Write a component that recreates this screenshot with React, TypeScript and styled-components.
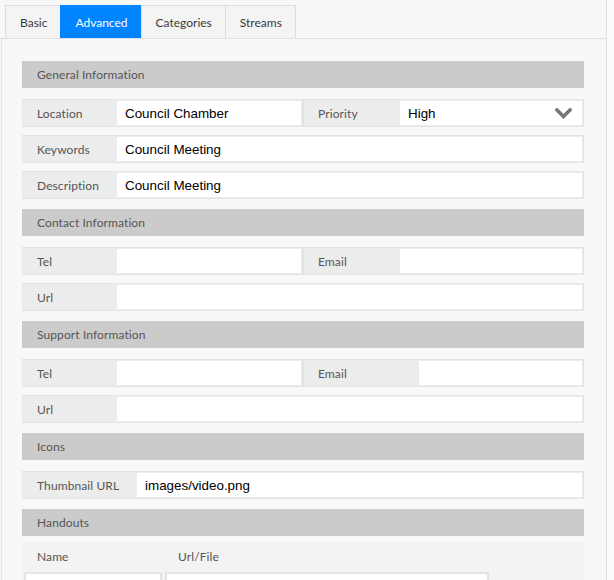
import React from "react";
import styled, { createGlobalStyle } from "styled-components";

const GlobalStyle = createGlobalStyle`
  html, body {
    margin: 0;
    padding: 0;
    background: #fbfbfb;
  }
  * { box-sizing: border-box; }
`;

const Frame = styled.div`
  width: 607px;
  min-height: 580px;
  background: #f8f8f8;
  border-right: 1px solid #e4e4e4;
  font-family: Lato, "Open Sans", sans-serif;
  font-size: 12px;
  color: #555;
`;

const TabBar = styled.div`
  display: flex;
  padding: 5px 0 0 6px;
  height: 39px;
  border-bottom: 1px solid #e0e0e0;
`;

const Tab = styled.div<{ $active?: boolean }>`
  height: 33px;
  padding: 0 13px 0 14px;
  display: flex;
  align-items: center;
  border: 1px solid ${(p) => (p.$active ? "#0084ff" : "#dddddd")};
  border-bottom: none;
  margin-left: -1px;
  background: ${(p) => (p.$active ? "#0084ff" : "#f4f4f4")};
  color: ${(p) => (p.$active ? "#ffffff" : "#3a3a3a")};
  font-size: 12px;
`;

const Panel = styled.div`
  margin-left: 1px;
  border-left: 1px solid #e6e6e6;
  padding: 22px 22px 0 20px;
`;

const Section = styled.section`
  display: flex;
  flex-direction: column;
  gap: 8px;
  margin-bottom: 10px;
`;

const SectionHeader = styled.div`
  height: 27px;
  line-height: 27px;
  background: #cbcbcb;
  color: #555;
  padding-left: 15px;
  margin-bottom: 3px;
  letter-spacing: 0.1px;
`;

const FieldRow = styled.div`
  display: flex;
`;

const Field = styled.div`
  flex: 1;
  display: flex;
  height: 28px;
  padding: 1px;
  border: 1px solid #e3e3e3;
  background: #ececec;
`;

const Label = styled.div<{ $w: number }>`
  width: ${(p) => p.$w}px;
  flex: none;
  display: flex;
  align-items: center;
  padding-left: 13px;
  color: #555;
  letter-spacing: 0.1px;
`;

const Input = styled.div`
  flex: 1;
  position: relative;
  display: flex;
  align-items: center;
  background: #ffffff;
  padding-left: 8px;
  font-family: "Liberation Sans", Arial, sans-serif;
  font-size: 13.4px;
  color: #000;
`;

const Chevron = styled.svg`
  position: absolute;
  right: 10px;
  top: 50%;
  margin-top: -5px;
`;

const HandoutTable = styled.div`
  margin-top: -5px;
  background: #f3f3f3;
  padding: 7px 0 0 2px;
  display: grid;
  grid-template-columns: 138px 324px;
  column-gap: 3px;
  row-gap: 7px;
  height: 44px;
  overflow: hidden;
`;

const ColHead = styled.div<{ $pad: number }>`
  padding-left: ${(p) => p.$pad}px;
  height: 16px;
  line-height: 16px;
  color: #555;
  letter-spacing: 0.1px;
`;

const CellInput = styled.div`
  height: 26px;
  background: #fff;
  border: 2px solid #e4e4e4;
`;

type F = { label: string; w: number; value?: string; select?: boolean };

const Fld = ({ label, w, value, select }: F) => (
  <Field>
    <Label $w={w}>{label}</Label>
    <Input>
      {value}
      {select && (
        <Chevron width="17" height="11" viewBox="0 0 17 11">
          <path d="M2 2 L8.5 8.5 L15 2" fill="none" stroke="#777" strokeWidth="3.6" strokeLinecap="square" />
        </Chevron>
      )}
    </Input>
  </Field>
);

export default function App() {
  return (
    <>
      <GlobalStyle />
      <Frame>
        <TabBar>
          <Tab>Basic</Tab>
          <Tab $active>Advanced</Tab>
          <Tab>Categories</Tab>
          <Tab>Streams</Tab>
        </TabBar>
        <Panel>
          <Section>
            <SectionHeader>General Information</SectionHeader>
            <FieldRow>
              <Fld label="Location" w={93} value="Council Chamber" />
              <Fld label="Priority" w={95} value="High" select />
            </FieldRow>
            <FieldRow>
              <Fld label="Keywords" w={93} value="Council Meeting" />
            </FieldRow>
            <FieldRow>
              <Fld label="Description" w={93} value="Council Meeting" />
            </FieldRow>
          </Section>
          <Section>
            <SectionHeader>Contact Information</SectionHeader>
            <FieldRow>
              <Fld label="Tel" w={93} />
              <Fld label="Email" w={95} />
            </FieldRow>
            <FieldRow>
              <Fld label="Url" w={93} />
            </FieldRow>
          </Section>
          <Section>
            <SectionHeader>Support Information</SectionHeader>
            <FieldRow>
              <Fld label="Tel" w={93} />
              <Fld label="Email" w={114} />
            </FieldRow>
            <FieldRow>
              <Fld label="Url" w={93} />
            </FieldRow>
          </Section>
          <Section>
            <SectionHeader>Icons</SectionHeader>
            <FieldRow>
              <Fld label="Thumbnail URL" w={113} value="images/video.png" />
            </FieldRow>
          </Section>
          <Section>
            <SectionHeader>Handouts</SectionHeader>
            <HandoutTable>
              <ColHead $pad={13}>Name</ColHead>
              <ColHead $pad={13}>Url/File</ColHead>
              <CellInput />
              <CellInput />
            </HandoutTable>
          </Section>
        </Panel>
      </Frame>
    </>
  );
}
